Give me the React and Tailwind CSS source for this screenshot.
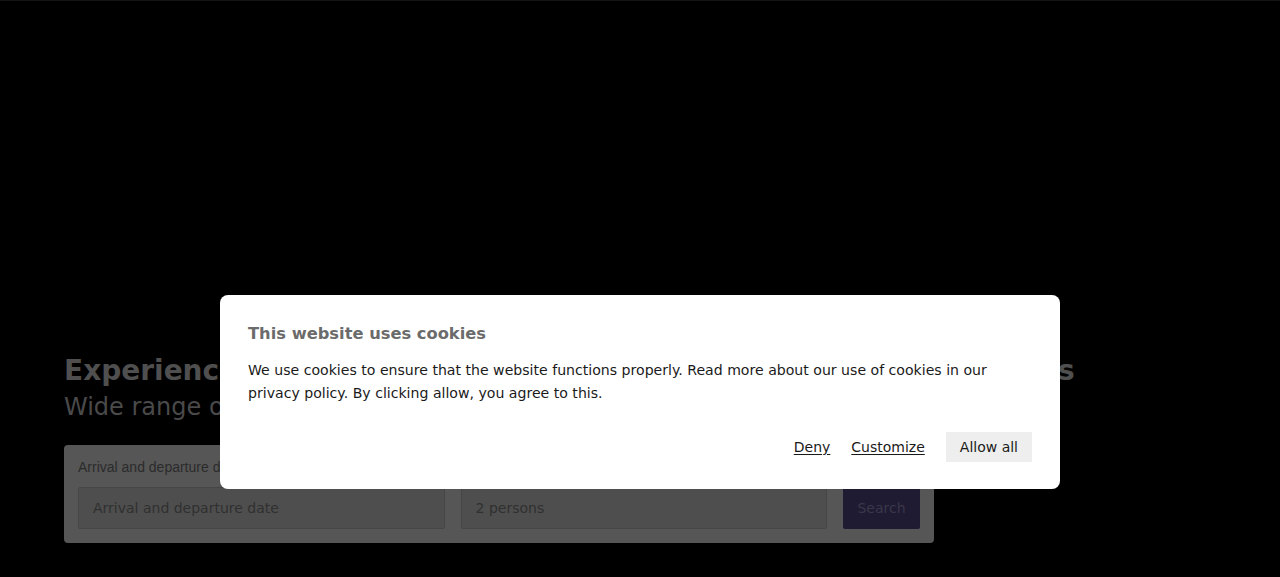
import React from "react";

const CookieModal = () => {
    return (
        <div className="fixed inset-0 flex justify-center items-start pt-[295px]">
            <div className="w-[840px] bg-white rounded-lg px-7 pt-[27px] pb-[27px] font-['DejaVu_Sans',sans-serif]">
                <h2 className="text-[16.3px] font-bold text-[#6b6b6b] leading-6">This website uses cookies</h2>
                <p className="mt-[13px] text-[14.1px] leading-[23px] text-[#1a1a1a]">
                    We use cookies to ensure that the website functions properly. Read more about our use of cookies in our privacy policy. By clicking allow, you agree to this.
                </p>
                <div className="mt-[27px] flex justify-end items-center text-[14px] leading-5 text-[#1a1a1a]">
                    <button className="underline underline-offset-2">Deny</button>
                    <button className="ml-[21px] underline underline-offset-2">Customize</button>
                    <button className="ml-[21px] h-[30px] px-[14px] bg-[#eeeeee]">Allow all</button>
                </div>
            </div>
        </div>
    );
};

const App = () => {
    return (
        <div className="relative w-full h-[577px] bg-black overflow-hidden border-t border-[#141414] font-['DejaVu_Sans',sans-serif]">
            {/* pagina atenuada detras del modal */}
            <div className="pl-16 pt-[354px]">
                <h1 className="text-[28px] font-bold leading-8 text-[#4f4f4f] whitespace-nowrap">
                    Experience unforgettable days in our beautiful holiday cottages
                </h1>
                <p className="mt-1 text-[24px] leading-8 text-[#4a4a4a] whitespace-nowrap">
                    Wide range of holiday homes across the whole country
                </p>
                <div className="mt-[22px] w-[870px] bg-[#565656] rounded-[4px] px-[14px] pb-[14px] pt-[12px]">
                    <label className="block text-[14px] leading-5 text-[#2b2b2b] font-['Liberation_Sans',sans-serif]">
                        Arrival and departure date
                    </label>
                    <div className="mt-[10px] flex gap-4 items-center">
                        <div className="w-[367px] h-[42px] flex items-center px-[14px] bg-[#4e4e4e] border border-[#464646] rounded-[2px] text-[14px] text-[#303030]">
                            Arrival and departure date
                        </div>
                        <div className="w-[367px] h-[42px] flex items-center px-[14px] bg-[#4e4e4e] border border-[#464646] rounded-[2px] text-[14px] text-[#303030]">
                            2 persons
                        </div>
                        <button className="w-[77px] h-[42px] bg-[#1f1b33] rounded-[2px] text-[14px] text-[#3a3749]">
                            Search
                        </button>
                    </div>
                </div>
            </div>
            <CookieModal />
        </div>
    );
};

export default App;
